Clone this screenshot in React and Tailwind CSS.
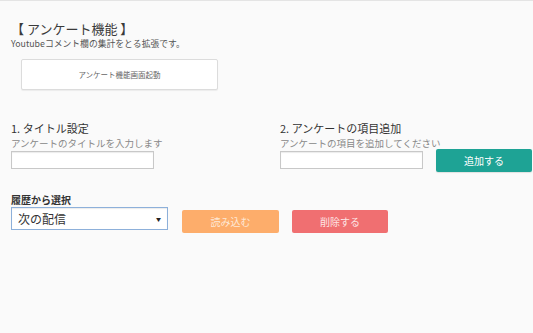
export default function App() {
  const font = { fontFamily: '"Noto Sans CJK JP", "Noto Sans", sans-serif' };
  return (
    <div
      className="w-[533px] h-[333px] bg-[#fafafa] border-t border-[#e4e4e4] overflow-hidden text-[#333]"
      style={font}
    >
      <div className="pl-[11px] pt-[19px] flex flex-col">
        <div className="text-[13px] leading-[17px] text-[#3a3a3a]">【 アンケート機能 】</div>
        <div className="mt-[1px] text-[8.8px] leading-[12px] text-[#555]">
          Youtubeコメント欄の集計をとる拡張です。
        </div>
        <div className="mt-[9px] ml-[10px] w-[197px] h-[31px] bg-white border border-[#dcdcdc] rounded-[2px] shadow-[0_1px_1px_rgba(0,0,0,0.06)] flex items-center justify-center text-[7.5px] text-[#666]">
          アンケート機能画面起動
        </div>

        <div className="mt-[31px] flex items-start">
          <div className="w-[269px] flex flex-col">
            <div className="text-[11px] leading-[14px] text-[#333]">1. タイトル設定</div>
            <div className="mt-[2px] text-[9.5px] leading-[12px] text-[#888]">
              アンケートのタイトルを入力します
            </div>
            <div className="mt-[2px] w-[143px] h-[18px] bg-white border border-[#c8c8c8] shadow-[inset_0_1px_1px_rgba(0,0,0,0.08)]" />
          </div>
          <div className="flex flex-col">
            <div className="text-[11px] leading-[14px] text-[#333]">2. アンケートの項目追加</div>
            <div className="mt-[2px] text-[9.5px] leading-[12px] text-[#888]">
              アンケートの項目を追加してください
            </div>
            <div className="flex items-start">
              <div className="mt-[2px] w-[143px] h-[18px] bg-white border border-[#c8c8c8] shadow-[inset_0_1px_1px_rgba(0,0,0,0.08)]" />
              <div className="ml-[13px] w-[96px] h-[23px] bg-[#1ea395] rounded-[2px] flex items-center justify-center text-[10px] text-white shadow-[0_1px_1px_rgba(0,0,0,0.1)]">
                追加する
              </div>
            </div>
          </div>
        </div>

        <div className="mt-[22px] text-[10px] leading-[12px] font-bold text-[#333]">履歴から選択</div>
        <div className="mt-[1px] flex items-start">
          <div className="w-[157px] h-[23px] bg-white border border-[#8db0da] shadow-[inset_0_1px_1px_rgba(0,0,0,0.08)] flex items-center justify-between pl-[6px] pr-[6px]">
            <span className="text-[12px] text-[#333]">次の配信</span>
            <span className="text-[5px] text-[#222]">▼</span>
          </div>
          <div className="mt-[3px] ml-[14px] w-[97px] h-[23px] bg-[#fdad6b] rounded-[2px] flex items-center justify-center text-[10px] text-[#fde9d8]">
            読み込む
          </div>
          <div className="mt-[3px] ml-[13px] w-[96px] h-[23px] bg-[#f06f71] rounded-[2px] flex items-center justify-center text-[10px] text-[#fde4e4]">
            削除する
          </div>
        </div>
      </div>
    </div>
  );
}
